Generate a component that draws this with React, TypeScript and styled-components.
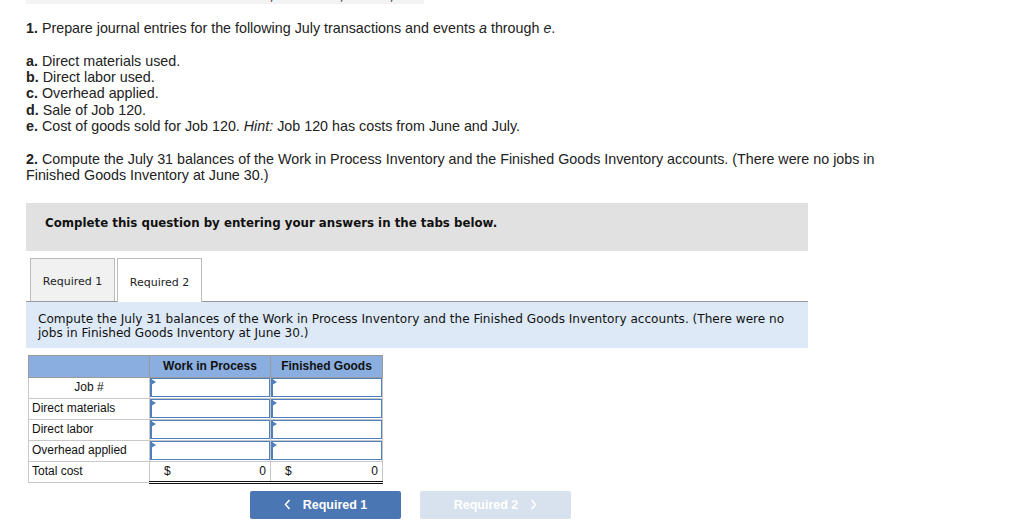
import React from "react";
import styled, { createGlobalStyle } from "styled-components";

const Global = createGlobalStyle`
  html, body { margin: 0; padding: 0; background: #fff; }
  body { font-family: "Liberation Sans", Arial, sans-serif; color: #222; }
`;

const Page = styled.div`
  padding: 0 0 0 26px;
  width: 782px;
`;

const CutRow = styled.div`
  width: 398px;
  height: 4px;
  background: #f3f3f3;
  overflow: hidden;
  display: flex;
  font-family: "Liberation Mono", monospace;
  font-size: 12px;
  line-height: 12px;
  color: #333;
`;

const CutCell = styled.span<{ $w: number; $right?: boolean }>`
  width: ${(p) => p.$w}px;
  margin-top: -9px;
  text-align: ${(p) => (p.$right ? "right" : "left")};
  white-space: nowrap;
`;

const Para = styled.p<{ $top: number }>`
  margin: ${(p) => p.$top}px 0 0 0;
  width: 856px;
  font-size: 14.3px;
  line-height: 16.5px;
`;

const List = styled.div`
  margin-top: 16px;
  font-size: 14.3px;
  line-height: 16.4px;
`;

const Notice = styled.div`
  margin-top: 19px;
  height: 48px;
  background: #e1e1e1;
  box-sizing: border-box;
  padding: 12px 0 0 19px;
  font-family: "DejaVu Sans", Verdana, sans-serif;
  font-weight: bold;
  font-size: 11.8px;
  line-height: 16px;
  color: #111;
`;

const Tabs = styled.div`
  margin-top: 7px;
  display: flex;
  padding-left: 4px;
  gap: 2px;
  border-bottom: 1px solid #999;
`;

const Tab = styled.div<{ $active?: boolean }>`
  width: 85px;
  box-sizing: border-box;
  border: 1px solid #bbb;
  border-bottom: none;
  background: ${(p) => (p.$active ? "#fff" : "#f1f1f1")};
  margin-bottom: ${(p) => (p.$active ? "-1px" : "0")};
  height: ${(p) => (p.$active ? "44px" : "43px")};
  padding-top: ${(p) => (p.$active ? "4px" : "3px")};
  display: flex;
  align-items: center;
  justify-content: center;
  font-family: "DejaVu Sans", Verdana, sans-serif;
  font-size: 11px;
  color: #222;
`;

const Panel = styled.div`
  background: #dde9f6;
  height: 46px;
  box-sizing: border-box;
  padding: 10px 12px 0 12px;
  font-family: "DejaVu Sans", Verdana, sans-serif;
  font-size: 12.1px;
  line-height: 14px;
  color: #111;
`;

const Table = styled.table`
  margin: 7px 0 0 2px;
  border-collapse: collapse;
  font-family: "Liberation Sans", Arial, sans-serif;
  font-size: 12px;
  color: #111;
`;

const HeadCell = styled.th<{ $w: number }>`
  width: ${(p) => p.$w}px;
  height: 22px;
  box-sizing: border-box;
  background: #8aaedf;
  border: 1px solid #9a9a9a;
  font-weight: bold;
  text-align: center;
  padding: 0 0 1px 0;
`;

const LabelCell = styled.td<{ $center?: boolean }>`
  height: 21px;
  box-sizing: border-box;
  border: 1px solid #c8c8c8;
  padding: 0 3px 1px 3px;
  text-align: ${(p) => (p.$center ? "center" : "left")};
  background: #fff;
`;

const InputCell = styled.td`
  height: 21px;
  box-sizing: border-box;
  border: 1px solid #c8c8c8;
  padding: 0;
  position: relative;
`;

const InputBox = styled.div`
  height: 19px;
  box-sizing: border-box;
  border: 1px solid #4f7fbd;
  box-shadow: inset 1px 0 0 #4f7fbd;
  background: #fff;
`;

const Marker = styled.span`
  position: absolute;
  left: 1px;
  top: 1px;
  width: 0;
  height: 0;
  border-top: 3.5px solid transparent;
  border-bottom: 3.5px solid transparent;
  border-left: 5px solid #4f7fbd;
`;

const TotalCell = styled.td`
  height: 21px;
  box-sizing: border-box;
  border-top: 1px solid #c8c8c8;
  border-left: 1px solid #c8c8c8;
  border-right: 1px solid #c8c8c8;
  border-bottom: 3px double #111;
  padding: 0 4px 1px 14px;
`;

const TotalInner = styled.div`
  display: flex;
  justify-content: space-between;
`;

const Nav = styled.div`
  margin: 7px 0 0 224px;
  display: flex;
  gap: 19px;
`;

const NavButton = styled.div<{ $disabled?: boolean }>`
  width: 151px;
  height: 28px;
  border-radius: 2px;
  background: ${(p) => (p.$disabled ? "#d8e2ee" : "#4a76b3")};
  color: #fff;
  display: flex;
  align-items: center;
  justify-content: center;
  gap: 12px;
  font-family: "Liberation Sans", Arial, sans-serif;
  font-weight: bold;
  font-size: 12.5px;
`;

const Chevron = ({ dir }: { dir: "left" | "right" }) => (
  <svg width="7" height="11" viewBox="0 0 7 11">
    <path
      d={dir === "left" ? "M5.5 1 L1.5 5.5 L5.5 10" : "M1.5 1 L5.5 5.5 L1.5 10"}
      fill="none"
      stroke="#fff"
      strokeWidth="1.5"
    />
  </svg>
);

const rows = ["Job #", "Direct materials", "Direct labor", "Overhead applied"];

export default function App() {
  return (
    <>
      <Global />
      <Page>
        <CutRow>
          <CutCell $w={12} />
          <CutCell $w={150}>Closed Sales Used</CutCell>
          <CutCell $w={110} $right>6,000</CutCell>
          <CutCell $w={70} $right>7,500</CutCell>
          <CutCell $w={50} $right>9,500</CutCell>
        </CutRow>
        <Para $top={16}>
          <b>1.</b> Prepare journal entries for the following July transactions and events <i>a</i> through <i>e</i>.
        </Para>
        <List>
          <div><b>a.</b> Direct materials used.</div>
          <div><b>b.</b> Direct labor used.</div>
          <div><b>c.</b> Overhead applied.</div>
          <div><b>d.</b> Sale of Job 120.</div>
          <div><b>e.</b> Cost of goods sold for Job 120. <i>Hint:</i> Job 120 has costs from June and July.</div>
        </List>
        <Para $top={16}>
          <b>2.</b> Compute the July 31 balances of the Work in Process Inventory and the Finished Goods Inventory accounts. (There were no jobs in Finished Goods Inventory at June 30.)
        </Para>
        <Notice>Complete this question by entering your answers in the tabs below.</Notice>
        <Tabs>
          <Tab>Required 1</Tab>
          <Tab $active>Required 2</Tab>
        </Tabs>
        <Panel>
          Compute the July 31 balances of the Work in Process Inventory and the Finished Goods Inventory accounts. (There were no jobs in Finished Goods Inventory at June 30.)
        </Panel>
        <Table>
          <thead>
            <tr>
              <HeadCell $w={121} />
              <HeadCell $w={121}>Work in Process</HeadCell>
              <HeadCell $w={112}>Finished Goods</HeadCell>
            </tr>
          </thead>
          <tbody>
            {rows.map((r, i) => (
              <tr key={r}>
                <LabelCell $center={i === 0}>{r}</LabelCell>
                <InputCell>
                  <InputBox />
                  <Marker />
                </InputCell>
                <InputCell>
                  <InputBox />
                  <Marker />
                </InputCell>
              </tr>
            ))}
            <tr>
              <LabelCell>Total cost</LabelCell>
              <TotalCell>
                <TotalInner><span>$</span><span>0</span></TotalInner>
              </TotalCell>
              <TotalCell>
                <TotalInner><span>$</span><span>0</span></TotalInner>
              </TotalCell>
            </tr>
          </tbody>
        </Table>
        <Nav>
          <NavButton>
            <Chevron dir="left" />
            <span>Required 1</span>
          </NavButton>
          <NavButton $disabled>
            <span>Required 2</span>
            <Chevron dir="right" />
          </NavButton>
        </Nav>
      </Page>
    </>
  );
}
